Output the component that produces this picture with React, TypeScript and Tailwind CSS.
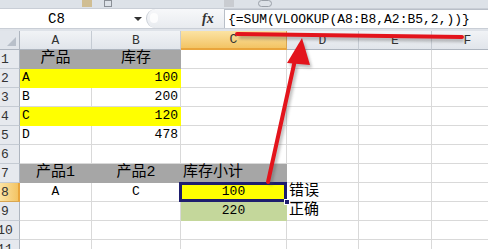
import React from "react";

type CellProps = {
  text?: string;
  align?: "left" | "center" | "right";
  fill?: string;
  cjk?: boolean;
  selected?: boolean;
};

const cols = ["A", "B", "C", "D", "E", "F"];

// row -> column -> cell
const data: Record<number, Record<string, CellProps>> = {
  1: {
    A: { text: "产品", align: "center", fill: "gray", cjk: true },
    B: { text: "库存", align: "center", fill: "gray", cjk: true },
  },
  2: {
    A: { text: "A", align: "left", fill: "yellow" },
    B: { text: "100", align: "right", fill: "yellow" },
  },
  3: { A: { text: "B", align: "left" }, B: { text: "200", align: "right" } },
  4: {
    A: { text: "C", align: "left", fill: "yellow" },
    B: { text: "120", align: "right", fill: "yellow" },
  },
  5: { A: { text: "D", align: "left" }, B: { text: "478", align: "right" } },
  7: {
    A: { text: "产品1", align: "center", fill: "gray", cjk: true },
    B: { text: "产品2", align: "center", fill: "gray", cjk: true },
    C: { text: "库存小计", align: "left", fill: "gray", cjk: true },
  },
  8: {
    A: { text: "A", align: "center" },
    B: { text: "C", align: "center" },
    C: { text: "100", align: "center", fill: "yellow", selected: true },
    D: { text: "错误", align: "left", cjk: true },
  },
  9: {
    C: { text: "220", align: "center", fill: "green" },
    D: { text: "正确", align: "left", cjk: true },
  },
};

const fillClass: Record<string, string> = {
  gray: "bg-[#a6a6a6] border-[#a6a6a6]",
  yellow: "bg-[#ffff00] border-[#ffff00]",
  green: "bg-[#c4d79b] border-[#c4d79b]",
};

function Cell({ text, align = "left", fill, cjk, selected }: CellProps) {
  const justify =
    align === "center" ? "justify-center" : align === "right" ? "justify-end" : "justify-start";
  return (
    <div
      className={`relative flex items-end ${justify} border-r border-b px-[2px] pb-[1px] ${
        fill ? fillClass[fill] : "bg-white border-[#d9d9d9]"
      }`}
    >
      {text && (
        <span
          className={`whitespace-nowrap leading-none ${
            cjk ? "text-[15px] pb-[1px]" : "text-[13px] pb-[2px]"
          } text-black`}
        >
          {text}
        </span>
      )}
      {selected && (
        <>
          <div className="absolute -left-[2px] -top-[1px] -right-px -bottom-px border-[3px] border-[#1e1e6e] z-10" />
          <div className="absolute -right-[4px] -bottom-[4px] w-[6px] h-[6px] bg-[#1e1e6e] border border-white z-20" />
        </>
      )}
    </div>
  );
}

function ColHeader({ label, active }: { label: string; active?: boolean }) {
  return (
    <div
      className={`flex items-end justify-center border-r pb-[2px] text-[13px] leading-none ${
        active
          ? "bg-gradient-to-b from-[#fbe3a3] to-[#f3c463] border-[#d9a650] border-b-2 border-b-[#e9a53c] text-[#333]"
          : "bg-gradient-to-b from-[#f1f3f6] to-[#e1e5eb] border-[#c5cbd3] border-b border-b-[#aeb5bf] text-[#333]"
      }`}
    >
      {label}
    </div>
  );
}

function RowHeader({ n, active }: { n: number; active?: boolean }) {
  return (
    <div
      className={`relative overflow-hidden border-b border-r ${
        active
          ? "bg-gradient-to-r from-[#fbe3a3] to-[#f3c463] border-[#d9a650] border-r-2 border-r-[#e9a53c]"
          : "bg-[#e6e9ee] border-[#c5cbd3] border-r-[#aeb5bf]"
      }`}
    >
      <div className="absolute left-0 bottom-[2px] w-[10px] flex justify-center text-[13px] leading-none text-[#333]">
        <span className="whitespace-nowrap">{n}</span>
      </div>
    </div>
  );
}

export default function App() {
  const rows = Array.from({ length: 11 }, (_, i) => i + 1);
  return (
    <div className="relative w-[488px] h-[249px] overflow-hidden bg-white font-['Liberation_Mono','Noto_Sans_CJK_SC',monospace]">
      {/* ribbon remnant */}
      <div className="h-[9px] bg-[#dde2e8] border-b border-[#c9ced6] flex">
        <div className="ml-[82px] w-[10px] h-[7px] bg-[#c8a75a] opacity-60" />
        <div className="ml-[12px] w-[8px] h-[7px] border border-[#8a8f96]" />
        <div className="ml-[112px] w-[10px] h-[7px] bg-[#c9ccd1]" />
        <div className="ml-[24px] w-[14px] h-[7px] border border-[#9aa0a8] rounded-sm" />
      </div>

      {/* formula bar */}
      <div className="h-[19px] flex bg-white">
        <div className="w-[146px] flex items-center relative">
          <span className="absolute left-[48px] top-[3px] text-[14px] leading-none text-black">C8</span>
          <div className="absolute left-[134px] top-[8px] w-0 h-0 border-l-[4px] border-r-[4px] border-t-[4px] border-l-transparent border-r-transparent border-t-[#333]" />
        </div>
        <div className="w-[78px] flex items-center rounded-l-full border-l border-[#c9ced6] bg-gradient-to-b from-[#f7f8fa] to-[#e8ebef] relative">
          <div className="absolute left-[3px] top-[4px] w-[8px] h-[10px] rounded-full bg-white opacity-80" />
          <span className="ml-[55px] text-[14px] leading-none italic font-bold text-[#333] font-['Liberation_Serif',serif]">
            fx
          </span>
        </div>
        <div className="flex-1 flex items-center border-l border-t border-[#b9bfc8] pl-[3px]">
          <span className="text-[13px] leading-none text-black whitespace-nowrap">
            {"{=SUM(VLOOKUP(A8:B8,A2:B5,2,))}"}
          </span>
        </div>
      </div>
      <div className="h-[3px] bg-[#dfe3e9] border-t border-[#c9ced6]" />

      {/* sheet */}
      <div className="grid grid-cols-[20px_72px_89px_106px_72px_73px_72px] auto-rows-[19px] w-[504px]">
        <div className="relative bg-[#e1e5eb] border-r border-b border-[#aeb5bf]">
          <div className="absolute right-[3px] bottom-[3px] w-0 h-0 border-l-[9px] border-t-[9px] border-l-transparent border-t-transparent border-b-0 border-r-0 [border-bottom:0] border-[#b5bcc6]" style={{ borderRight: "9px solid #b8bfc9", borderTop: "9px solid transparent" }} />
        </div>
        {cols.map((c) => (
          <ColHeader key={c} label={c} active={c === "C"} />
        ))}
        {rows.map((r) => (
          <React.Fragment key={r}>
            <RowHeader n={r} active={r === 8} />
            {cols.map((c) => (
              <Cell key={c} {...(data[r]?.[c] ?? {})} />
            ))}
          </React.Fragment>
        ))}
      </div>

      {/* red annotation arrows */}
      <svg className="absolute inset-0 pointer-events-none z-30" width="488" height="249" viewBox="0 0 488 249">
        <defs>
          <filter id="sh" x="-20%" y="-20%" width="140%" height="140%">
            <feGaussianBlur stdDeviation="1.5" />
          </filter>
        </defs>
        <g opacity="0.35" filter="url(#sh)" transform="translate(2 3)">
          <line x1="237" y1="34" x2="462" y2="37" stroke="#444" strokeWidth="4" />
          <line x1="268" y1="182" x2="295" y2="60" stroke="#444" strokeWidth="4" />
          <polygon points="302,38 287,63 310,65" fill="#444" />
        </g>
        <line x1="237" y1="34" x2="462" y2="37" stroke="#e3141c" strokeWidth="4" strokeLinecap="round" />
        <line x1="268" y1="182" x2="295" y2="60" stroke="#e3141c" strokeWidth="4" strokeLinecap="round" />
        <polygon points="302,38 287,63 310,65" fill="#e3141c" />
      </svg>
    </div>
  );
}
